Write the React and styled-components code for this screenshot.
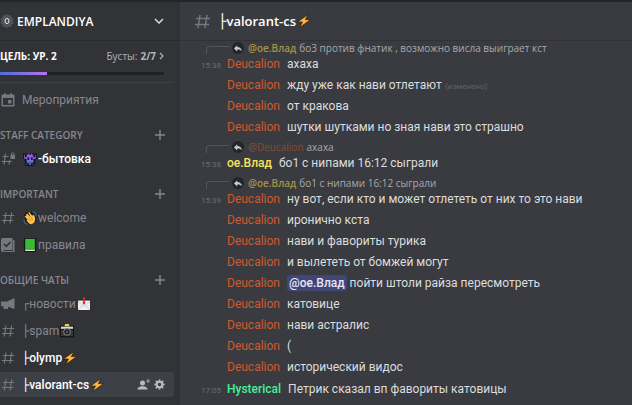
import React from "react";
import styled, { createGlobalStyle } from "styled-components";

const emojis = {
  monster: (
    <>
      <path d="M0 2h3v2h1V1h2v1h4V1h2v3h1V2h3v6h-2v3h-1v2h1v3H2v-3h1v-2H2V8H0z" fill="#0c0a18" />
      <path d="M4 4h1V2h2v1h2V2h2v2h1v8H4zM1 3h1v3h2v2H2V7H1zM14 3h1v4h-1v1h-2V6h2z" fill="#8b62e0" />
      <path d="M5 6h2v3H5zM9 6h2v3H9z" fill="#1d1440" />
      <path d="M5 11h1v1h4v-1h1v2H9v2H7v-2H5zM3 14h2v1H3zM11 14h2v1h-2z" fill="#2f8595" />
    </>
  ),
  wave: (
    <>
      <path d="M2 6 1 4l3-3 3 1 3-1 3 2 2 5-1 5-4 3H7l-4-4z" fill="#1c1a16" />
      <path d="m2 6 2-1 3 3-4-4 2-1 4 4-3-5 1-1 4 5V4l2 1 1 4-1 4-3 2H8l-4-4 1-1z" fill="#fbc04e" />
      <path d="M11 1c2 0 4 2 4 4M1 10c0 3 2 5 4 5" fill="none" stroke="#287b91" strokeWidth="1.2" />
      <path d="m5 9 3 3M7 8l3 3M9 7l2 3" stroke="#c48326" strokeWidth=".8" />
    </>
  ),
  book: (
    <>
      <rect x="1" width="14" height="16" rx="1.5" fill="#101a10" />
      <path d="M2.5 1h11v12h-11z" fill="#38bd32" />
      <path d="M2.5 13h11v1.8h-11z" fill="#eef3ed" />
      <path d="M2.5 12.6h11" stroke="#278623" strokeWidth=".7" />
    </>
  ),
  mail: (
    <>
      <rect y="3" width="16" height="13" rx="1" fill="#17181a" />
      <path d="M1 4h14v11H1z" fill="#edf0f2" />
      <path d="m1 5 7 6 7-6M1 15l5-5M15 15l-5-5" fill="none" stroke="#c3c8cc" strokeWidth="1" />
      <path d="M7 0h2v6h1L8 9 6 6h1z" fill="#e1262d" />
    </>
  ),
  camera: (
    <>
      <path d="M0 2h5l1-1h4l1 1h5v13H0z" fill="#0c0d0e" />
      <path d="M1 3h14v2.500H1z" fill="#d8dcdf" />
      <path d="M1 6.500h14V14H1z" fill="#35393d" />
      <path d="M6 0h4l1 2.500H5z" fill="#f4d34a" />
      <circle cx="8" cy="9" r="3.800" fill="#191b1d" stroke="#92979c" strokeWidth="1" />
      <circle cx="8" cy="9" r="1.600" fill="#4f5559" />
    </>
  ),
  bolt: (
    <path
      d="M12.500.6.6 9.200h5.600L3.200 15.400 15.500 6.400H9.600z"
      fill="#fbb642"
      stroke="#231a12"
      strokeWidth=".8"
      strokeLinejoin="round"
    />
  ),
};

function Emoji({ name, size = 14 }) {
  return (
    <EmojiSvg viewBox="0 0 16 16" width={size} height={size} aria-hidden="true">
      {emojis[name]}
    </EmojiSvg>
  );
}

function HashIcon({ size = 14, locked }) {
  return (
    <Svg viewBox="0 0 14 14" width={size} height={size} aria-hidden="true">
      <path
        d={locked ? "M4.5 1.5 3 12.5M8.6 8.2 8 12.5M1.5 4.5h6M.8 9.5h10" : "M5 1.5 3.3 12.5M10.7 1.5 9 12.5M1.6 4.5h11.6M.8 9.5h11.6"}
        fill="none"
        stroke="currentColor"
        strokeWidth="1.2"
      />
      {locked && (
        <>
          <path d="M9.500 3h4.500v4H9.500z" fill="currentColor" />
          <path d="M10.500 3.200V2a1.200 1.200 0 0 1 2.500 0v1.200" fill="none" stroke="currentColor" />
        </>
      )}
    </Svg>
  );
}

function RulesIcon() {
  return (
    <Svg viewBox="0 0 14 14" width="14" height="14" aria-hidden="true">
      <path d="M2 0h9.500v12H2.500v1H12V2h1.500v12H2a2 2 0 0 1-2-2V2a2 2 0 0 1 2-2z" fill="currentColor" />
      <path d="m3 6 2.300 2.400L9.500 4" fill="none" stroke="#323337" strokeWidth="1.600" />
    </Svg>
  );
}

function NewsIcon() {
  return (
    <Svg viewBox="0 0 14 14" width="14" height="14" aria-hidden="true">
      <path d="M13.500 1v11L7 9.700V12H2.800L2.200 9.300H0V4.500h6z" fill="currentColor" />
    </Svg>
  );
}

function CalendarIcon() {
  return (
    <Svg viewBox="0 0 14 14" width="14" height="14" aria-hidden="true">
      <path
        d="M3 0h1.500v1.500h5V0H11v1.500h1.500A1 1 0 0 1 13.500 2.500v10a1 1 0 0 1-1 1h-11a1 1 0 0 1-1-1v-10a1 1 0 0 1 1-1H3zM2 5v7h10V5z"
        fill="currentColor"
        fillRule="evenodd"
      />
      <path d="M7 7h3.500v3.500H7z" fill="currentColor" />
    </Svg>
  );
}

function PlusIcon() {
  return (
    <Svg viewBox="0 0 10 10" width="10" height="10" aria-hidden="true">
      <path d="M5 0v10M0 5h10" stroke="currentColor" strokeWidth="1.400" />
    </Svg>
  );
}

function ReplyIcon() {
  return (
    <Svg viewBox="0 0 10 8" width="8" height="7" aria-hidden="true">
      <path d="M4 0v2.200c3.500 0 5.500 2 6 5.300C8.500 5.800 7 5.200 4 5.300v2.500L0 3.900z" fill="currentColor" />
    </Svg>
  );
}

function InviteIcon() {
  return (
    <Svg viewBox="0 0 13 12" width="13" height="12" aria-hidden="true">
      <circle cx="5.500" cy="4" r="2.500" fill="currentColor" />
      <path d="M.500 10.500C.500 8 3 7.200 5.500 7.200s5 .8 5 3.300z" fill="currentColor" />
      <path d="M11 0v4M9 2h4" stroke="currentColor" strokeWidth=".8" />
    </Svg>
  );
}

function GearIcon() {
  return (
    <Svg viewBox="0 0 12 12" width="11" height="11" aria-hidden="true">
      <circle cx="6" cy="6" r="3" fill="none" stroke="currentColor" strokeWidth="2.200" />
      <path
        d="M6 .5V3M6 9v2.500M.5 6H3M9 6h2.500M2.100 2.100l1.800 1.800M8.100 8.100l1.800 1.800M9.900 2.100 8.100 3.900M3.900 8.100 2.100 9.900"
        stroke="currentColor"
        strokeWidth="2"
      />
    </Svg>
  );
}

const categories = [
  {
    title: "STAFF CATEGORY",
    channels: [{ icon: <HashIcon locked />, before: "monster", name: "-бытовка", unread: true }],
  },
  {
    title: "IMPORTANT",
    channels: [
      { icon: <HashIcon />, before: "wave", name: "welcome" },
      { icon: <RulesIcon />, before: "book", name: "правила" },
    ],
  },
  {
    title: "ОБЩИЕ ЧАТЫ",
    channels: [
      { icon: <NewsIcon />, branch: "┌", name: "новости", after: "mail" },
      { icon: <HashIcon />, branch: "├", name: "spam", after: "camera" },
      { icon: <HashIcon />, branch: "├", name: "olymp", after: "bolt", unread: true },
      { icon: <HashIcon />, branch: "├", name: "valorant-cs", after: "bolt", unread: true, active: true },
    ],
  },
];

const people = {
  deucalion: { name: "Deucalion", color: "#d1592c" },
  vlad: { name: "ое.Влад", color: "#fbe25c", bold: true },
  hysterical: { name: "Hysterical", color: "#45f09c", bold: true },
};

const groups = [
  {
    who: "deucalion",
    time: "15:38",
    reply: { to: "vlad", color: "#a39447", text: "бо3 против фнатик , возможно висла выиграет кст" },
    lines: [
      { text: "ахаха" },
      { text: "жду уже как нави отлетают", edited: true },
      { text: "от кракова" },
      { text: "шутки шутками но зная нави это страшно" },
    ],
  },
  {
    who: "vlad",
    time: "15:38",
    reply: { to: "deucalion", color: "#8a4a30", text: "ахаха" },
    lines: [{ text: "бо1 с нипами 16:12 сыграли" }],
  },
  {
    who: "deucalion",
    time: "15:39",
    reply: { to: "vlad", color: "#a39447", text: "бо1 с нипами 16:12 сыграли" },
    lines: [
      { text: "ну вот, если кто и может отлететь от них то это нави" },
      { text: "иронично кста" },
      { text: "нави и фавориты турика" },
      { text: "и вылететь от бомжей могут" },
      { mention: "@ое.Влад", text: " пойти штоли райза пересмотреть" },
      { text: "катовице" },
      { text: "нави астралис" },
      { text: "(" },
      { text: "исторический видос" },
    ],
  },
  {
    who: "hysterical",
    time: "17:05",
    lines: [{ text: "Петрик сказал вп фавориты катовицы" }],
  },
];

function Channel({ channel }) {
  const { icon, before, branch, name, after, unread, active } = channel;
  return (
    <ChannelRow $active={active}>
      <ChannelLink href="#" $unread={unread}>
        <ChannelIcon>{icon}</ChannelIcon>
        {before && <Emoji name={before} />}
        {branch && <Branch>{branch}</Branch>}
        <span>{name}</span>
        {after && <Emoji name={after} />}
      </ChannelLink>
      {active && (
        <ChannelActions>
          <IconButton aria-label="Пригласить">
            <InviteIcon />
          </IconButton>
          <IconButton aria-label="Настроить канал">
            <GearIcon />
          </IconButton>
        </ChannelActions>
      )}
    </ChannelRow>
  );
}

function MessageGroup({ group }) {
  const author = people[group.who];
  return (
    <Group $reply={Boolean(group.reply)}>
      {group.reply && (
        <Reply>
          <ReplySpine />
          <ReplyBadge>
            <ReplyIcon />
          </ReplyBadge>
          <ReplyName $color={group.reply.color} $bold={people[group.reply.to].bold}>
            @{people[group.reply.to].name}
          </ReplyName>
          <span>{group.reply.text}</span>
        </Reply>
      )}
      {group.lines.map((line, i) => (
        <Message key={i}>
          <Time>{i === 0 ? group.time : ""}</Time>
          <Author $color={author.color} $bold={author.bold}>
            {author.name}
          </Author>
          <Text>
            {line.mention && <Mention>{line.mention}</Mention>}
            {line.text}
            {line.edited && <Edited>(изменено)</Edited>}
          </Text>
        </Message>
      ))}
    </Group>
  );
}

export default function App() {
  return (
    <>
      <GlobalStyle />
      <Layout>
        <Sidebar>
          <ServerHeader>
            <ServerBadge>
              <svg viewBox="0 0 14 14" width="14" height="14" aria-hidden="true">
                <path
                  d="m7 0 1.800 1.300L11 1.200l.7 2.100L13.500 4.700 12.800 7l.7 2.300-1.800 1.400-.7 2.100-2.200-.1L7 14l-1.800-1.300-2.200.1-.7-2.100L.5 9.300 1.200 7 .5 4.700l1.800-1.400.7-2.100 2.200.1z"
                  fill="#4f5358"
                />
                <ellipse cx="7" cy="7" rx="2" ry="2.600" fill="none" stroke="#e3e5e8" />
              </svg>
            </ServerBadge>
            <ServerName>EMPLANDIYA</ServerName>
            <IconButton aria-label="Меню сервера">
              <Svg viewBox="0 0 10 6" width="10" height="6" aria-hidden="true">
                <path d="m1 1 4 4 4-4" fill="none" stroke="#dcddde" strokeWidth="1.500" />
              </Svg>
            </IconButton>
          </ServerHeader>
          <Goal>
            <GoalRow>
              <GoalTitle>ЦЕЛЬ: УР. 2</GoalTitle>
              <Boosts href="#">
                Бусты: <b>2/7</b>
                <Svg viewBox="0 0 5 8" width="5" height="8" aria-hidden="true">
                  <path d="m1 1 3 3-3 3" fill="none" stroke="currentColor" strokeWidth="1.200" />
                </Svg>
              </Boosts>
            </GoalRow>
            <GoalTrack>
              <GoalFill style={{ width: `${(2 / 7) * 100}%` }} />
            </GoalTrack>
          </Goal>
          <ChannelRow>
            <ChannelLink href="#">
              <ChannelIcon>
                <CalendarIcon />
              </ChannelIcon>
              <span>Мероприятия</span>
            </ChannelLink>
          </ChannelRow>
          {categories.map((category) => (
            <section key={category.title}>
              <CategoryHeader>
                <CategoryTitle>{category.title}</CategoryTitle>
                <IconButton aria-label="Создать канал">
                  <PlusIcon />
                </IconButton>
              </CategoryHeader>
              {category.channels.map((channel) => (
                <Channel key={channel.name} channel={channel} />
              ))}
            </section>
          ))}
        </Sidebar>
        <Chat>
          <ChatHeader>
            <HashIcon size={17} />
            <ChatTitle>
              <Branch $large>├</Branch>
              valorant-cs
              <Emoji name="bolt" />
            </ChatTitle>
          </ChatHeader>
          <Messages>
            {groups.map((group, i) => (
              <MessageGroup key={i} group={group} />
            ))}
          </Messages>
        </Chat>
      </Layout>
    </>
  );
}

const GlobalStyle = createGlobalStyle`
  * {
    box-sizing: border-box;
  }
  body {
    margin: 0;
    background: #3a3b40;
    font-family: "Open Sans", "Noto Sans", sans-serif;
    font-size: 12px;
    color: #dcddde;
  }
  a {
    color: inherit;
    text-decoration: none;
  }
`;
const Layout = styled.div`
  display: flex;
  min-height: 100vh;
  border-top: 2px solid #242528;
`;
const Sidebar = styled.nav`
  flex: 0 0 180px;
  padding-right: 6px;
  background: #323337;
  color: #85888e;
`;
const ServerHeader = styled.header`
  display: flex;
  align-items: center;
  height: 39px;
  margin-right: -6px;
  padding-right: 16px;
  border-bottom: 1px solid #2a2b2e;
`;
const ServerBadge = styled.span`
  display: flex;
  margin-right: 3px;
`;
const ServerName = styled.h1`
  flex: 1;
  margin: 0;
  font-size: 12px;
  font-weight: 600;
  color: #fff;
`;
const IconButton = styled.button`
  display: flex;
  padding: 0;
  border: 0;
  background: none;
  color: inherit;
  cursor: pointer;
`;
const Svg = styled.svg`
  display: block;
  flex: none;
`;
const EmojiSvg = styled.svg`
  flex: none;
  margin: 0 1px;
`;
const Goal = styled.section`
  height: 42px;
  margin-bottom: 4px;
  padding: 6px 10px 0 0;
  border-bottom: 1px solid #3f4044;
`;
const GoalRow = styled.div`
  display: flex;
  align-items: center;
  justify-content: space-between;
  height: 18px;
`;
const GoalTitle = styled.span`
  font-size: 10px;
  font-weight: 700;
  color: #fff;
`;
const Boosts = styled.a`
  display: flex;
  align-items: center;
  gap: 3px;
  font-size: 10px;
  color: #b0b3b8;
`;
const GoalTrack = styled.div`
  height: 3px;
  margin-top: 7px;
  border-radius: 0 2px 2px 0;
  background: #1f2023;
`;
const GoalFill = styled.div`
  height: 100%;
  background: linear-gradient(90deg, #4c6fd8, #b473ec);
`;
const ChannelRow = styled.div`
  display: flex;
  align-items: center;
  justify-content: space-between;
  height: 25px;
  margin: 2px 0;
  padding-right: 9px;
  border-radius: 0 3px 3px 0;
  background: ${(props) => (props.$active ? "#3e4047" : "transparent")};
  color: #b9bbbe;
`;
const ChannelLink = styled.a`
  display: flex;
  align-items: center;
  font-family: Roboto, "Noto Sans", sans-serif;
  font-weight: ${(props) => (props.$unread ? 500 : 400)};
  color: ${(props) => (props.$unread ? "#fff" : "#85888e")};
  white-space: nowrap;
`;
const ChannelIcon = styled.span`
  display: flex;
  width: 22px;
  padding-left: 1px;
  color: #75787e;
`;
const Branch = styled.span`
  font-family: "DejaVu Sans Mono", monospace;
  font-size: ${(props) => (props.$large ? "14px" : "12px")};
  font-weight: 400;
`;
const ChannelActions = styled.div`
  display: flex;
  align-items: center;
  gap: 4px;
`;
const CategoryHeader = styled.header`
  display: flex;
  align-items: center;
  justify-content: space-between;
  height: 16px;
  margin: 15px 0 3px;
  padding-right: 9px;
`;
const CategoryTitle = styled.h2`
  margin: 0;
  font-size: 10px;
  font-weight: 600;
`;
const Chat = styled.main`
  flex: 1;
  min-width: 0;
  background: #3a3b40;
`;
const ChatHeader = styled.header`
  display: flex;
  align-items: center;
  gap: 7px;
  height: 39px;
  padding-left: 14px;
  border-bottom: 1px solid #313236;
  color: #75787e;
`;
const ChatTitle = styled.h2`
  display: flex;
  align-items: center;
  margin: 0;
  font-size: 13px;
  font-weight: 600;
  color: #fff;
`;
const Messages = styled.ol`
  margin: 0;
  padding: 1px 0 0;
  list-style: none;
`;
const Group = styled.li`
  padding-top: ${(props) => (props.$reply ? "3px" : "1px")};
  &:first-child {
    padding-top: 0;
  }
`;
const Reply = styled.div`
  display: flex;
  align-items: center;
  height: 12px;
  padding-left: 26px;
  font-size: 10px;
  line-height: 12px;
  white-space: nowrap;
  color: #a7a9ad;
`;
const ReplySpine = styled.span`
  align-self: flex-end;
  width: 23px;
  height: 8px;
  margin-right: 3px;
  border-top: 1px solid #53555b;
  border-left: 1px solid #53555b;
  border-top-left-radius: 4px;
`;
const ReplyBadge = styled.span`
  display: flex;
  align-items: center;
  justify-content: center;
  width: 12px;
  height: 12px;
  margin-right: 4px;
  border-radius: 50%;
  background: #242528;
  color: #c9cbce;
`;
const ReplyName = styled.span`
  margin-right: 3px;
  font-weight: ${(props) => (props.$bold ? 600 : 400)};
  color: ${(props) => props.$color};
`;
const Message = styled.div`
  display: flex;
  align-items: baseline;
  font-family: Roboto, "Noto Sans", sans-serif;
  line-height: 21px;
`;
const Time = styled.time`
  flex: none;
  width: 41px;
  margin-right: 6px;
  font-size: 8px;
  line-height: 8px;
  text-align: right;
  color: #696c72;
`;
const Author = styled.span`
  flex: none;
  margin-right: 7px;
  font-weight: ${(props) => (props.$bold ? 500 : 400)};
  color: ${(props) => props.$color};
`;
const Text = styled.span`
  min-width: 0;
`;
const Mention = styled.span`
  padding: 1px 2px;
  border-radius: 3px;
  background: #414675;
  font-weight: 500;
  color: #e3e6fc;
`;
const Edited = styled.span`
  margin-left: 3px;
  font-size: 8px;
  line-height: 8px;
  color: #5f6268;
`;
